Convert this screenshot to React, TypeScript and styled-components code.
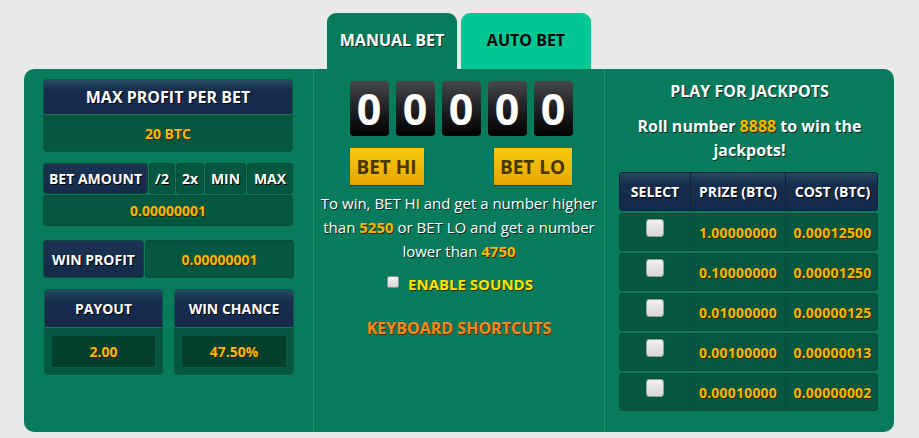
import React from "react";
import styled, { createGlobalStyle } from "styled-components";

const Global = createGlobalStyle`
  html, body { margin: 0; padding: 0; background: #e9e9e9; }
  body { font-family: "Open Sans", "Liberation Sans", sans-serif; }
  * { box-sizing: border-box; }
`;

const Page = styled.div`
  width: 919px;
  height: 438px;
  padding: 13px 25px 0 24px;
  display: flex;
  flex-direction: column;
`;

const Tabs = styled.div`
  display: flex;
  justify-content: center;
  gap: 4px;
  height: 56px;
`;

const Tab = styled.div<{ $active?: boolean }>`
  width: 130px;
  height: 56px;
  border-radius: 9px 9px 0 0;
  background: ${(p) => (p.$active ? "#077b5c" : "#00c793")};
  color: ${(p) => (p.$active ? "#fff" : "#0a0a0a")};
  text-shadow: ${(p) => (p.$active ? "1px 1px 0 #0b2a22" : "none")};
  font-weight: 700;
  font-size: 16px;
  display: flex;
  align-items: center;
  justify-content: center;
  padding-bottom: 2px;
`;

const Panel = styled.div`
  height: 363px;
  background: #077b5c;
  border-radius: 10px;
  display: grid;
  grid-template-columns: 289px 291px 290px;
`;

const Column = styled.div<{ $divider?: boolean }>`
  border-left: ${(p) => (p.$divider ? "1px solid #16966d" : "none")};
  display: flex;
  flex-direction: column;
  align-items: center;
`;

const LeftCol = styled(Column)`
  padding: 10px 20px 0 19px;
  align-items: stretch;
`;

const Box = styled.div`
  border-radius: 4px;
  overflow: hidden;
  border: 1px solid #0b5a40;
  background: #06573f;
`;

const NavyHead = styled.div<{ $h: number; $size?: number }>`
  height: ${(p) => p.$h}px;
  background: linear-gradient(#274a63 0%, #172d4d 30%, #152a4a 100%);
  color: #fff;
  font-weight: 700;
  font-size: ${(p) => p.$size ?? 14}px;
  text-shadow: 1px 1px 0 #000;
  display: flex;
  align-items: center;
  justify-content: center;
  border-bottom: 1px solid #1e7458;
`;

const Value = styled.div<{ $h: number }>`
  height: ${(p) => p.$h}px;
  color: #f8b800;
  font-weight: 700;
  font-size: 14px;
  text-shadow: 1px 1px 0 #3a2000;
  display: flex;
  align-items: center;
  justify-content: center;
`;

const BetGroup = styled.div`
  margin-top: 11px;
  display: flex;
  flex-direction: column;
  gap: 1px;
`;

const BetRow = styled.div`
  display: flex;
  gap: 1px;
  height: 31px;
`;

const Cell = styled.div<{ $w?: number; $navy?: boolean }>`
  ${(p) => (p.$w ? `width: ${p.$w}px;` : "flex: 1;")}
  background: ${(p) =>
    p.$navy ? "linear-gradient(#1b3352, #152a4a)" : "#06573f"};
  border: 1px solid #0a4c37;
  border-radius: 3px;
  color: #fff;
  font-weight: 700;
  font-size: 14px;
  text-shadow: 1px 1px 0 #000;
  display: flex;
  align-items: center;
  justify-content: center;
`;

const BetValue = styled(Cell)`
  height: 31px;
  flex: none;
  color: #f8b800;
  text-shadow: 1px 1px 0 #3a2000;
`;

const ProfitRow = styled.div`
  margin-top: 14px;
  height: 38px;
  display: flex;
  gap: 1px;
`;

const ProfitValue = styled(Cell)`
  color: #f8b800;
  text-shadow: 1px 1px 0 #3a2000;
  margin-right: -1px;
`;

const StatRow = styled.div`
  margin-top: 11px;
  display: grid;
  grid-template-columns: 119px 120px;
  column-gap: 11px;
  margin-left: 1px;
`;

const StatBox = styled(Box)`
  height: 86px;
  display: flex;
  flex-direction: column;
`;

const StatInner = styled.div`
  margin: 7px 6px 6px;
  height: 33px;
  background: #033f2c;
  border: 1px solid #0b5a42;
  border-radius: 2px;
  color: #f8b800;
  font-weight: 700;
  font-size: 14px;
  text-shadow: 1px 1px 0 #3a2000;
  display: flex;
  align-items: center;
  justify-content: center;
`;

const MiddleCol = styled(Column)`
  padding-top: 12px;
`;

const Digits = styled.div`
  display: flex;
  gap: 7px;
  margin-left: 4px;
`;

const Digit = styled.div`
  width: 39px;
  height: 55px;
  border-radius: 4px;
  background: linear-gradient(#45484d 0%, #232427 45%, #000 100%);
  color: #fff;
  font-weight: 700;
  font-size: 43px;
  display: flex;
  align-items: center;
  justify-content: center;
  line-height: 1;
`;

const Buttons = styled.div`
  margin-top: 12px;
  width: 222px;
  margin-left: 3px;
  display: flex;
  justify-content: space-between;
`;

const BetButton = styled.div<{ $w: number }>`
  width: ${(p) => p.$w}px;
  height: 37px;
  background: linear-gradient(#f7cb12, #e6a700);
  box-shadow: 0 1px 1px rgba(0, 0, 0, 0.35);
  color: #4a3505;
  font-weight: 700;
  font-size: 19px;
  display: flex;
  align-items: center;
  justify-content: center;
`;

const Info = styled.div`
  margin-top: 6px;
  width: 280px;
  text-align: center;
  color: #fff;
  font-size: 15px;
  line-height: 24px;
  text-shadow: 1px 1px 0 #0b2a22;
`;

const Num = styled.span`
  color: #f8b800;
  font-weight: 700;
  text-shadow: 1px 1px 0 #3a2000;
`;

const SoundRow = styled.label`
  margin-top: 11px;
  display: flex;
  align-items: center;
  gap: 9px;
  color: #ffe400;
  font-weight: 700;
  font-size: 15px;
  text-shadow: 1px 1px 0 #2a2a00;
  margin-left: 2px;
`;

const SmallBox = styled.span`
  width: 12px;
  height: 12px;
  border: 1px solid #8e8e8e;
  border-radius: 2px;
  background: linear-gradient(#f4f4f4, #d6d6d6);
  margin-top: -4px;
`;

const Shortcuts = styled.div`
  margin-top: 23px;
  color: #f98a1e;
  font-weight: 700;
  font-size: 16px;
  text-shadow: 1px 1px 0 #5a2a00;
`;

const RightCol = styled(Column)`
  padding-top: 10px;
`;

const Title = styled.div`
  color: #fff;
  font-weight: 700;
  font-size: 16px;
  line-height: 24px;
  text-shadow: 1px 1px 0 #0b2a22;
  text-align: center;
`;

const Roll = styled(Title)`
  margin-top: 11px;
  width: 250px;
`;

const Table = styled.div`
  margin-top: 10px;
  width: 259px;
  display: flex;
  flex-direction: column;
  gap: 2px;
  margin-left: -2px;
`;

const TRow = styled.div<{ $head?: boolean }>`
  display: grid;
  grid-template-columns: 70px 95px 94px;
  height: ${(p) => (p.$head ? 39 : 38)}px;
  border-radius: 3px;
  overflow: hidden;
  border: 1px solid ${(p) => (p.$head ? "#10283f" : "#0a4c37")};
  background: ${(p) =>
    p.$head ? "linear-gradient(#274a63 0%, #172d4d 30%, #152a4a 100%)" : "#06573f"};
`;

const TCell = styled.div<{ $head?: boolean; $first?: boolean }>`
  border-left: ${(p) => (p.$first ? "none" : `1px solid ${p.$head ? "#0e2238" : "#0a4c37"}`)};
  display: flex;
  align-items: center;
  justify-content: center;
  font-weight: 700;
  font-size: 14px;
  letter-spacing: ${(p) => (p.$head ? "0" : "0.2px")};
  color: ${(p) => (p.$head ? "#fff" : "#f8b800")};
  text-shadow: 1px 1px 0 ${(p) => (p.$head ? "#000" : "#3a2000")};
`;

const Check = styled.span`
  width: 18px;
  height: 18px;
  border-radius: 3px;
  border: 1px solid #9a9a9a;
  background: linear-gradient(#efefef, #d8d8d8);
  margin-top: -8px;
`;

const jackpots = [
  ["1.00000000", "0.00012500"],
  ["0.10000000", "0.00001250"],
  ["0.01000000", "0.00000125"],
  ["0.00100000", "0.00000013"],
  ["0.00010000", "0.00000002"],
];

export default function App() {
  return (
    <>
      <Global />
      <Page>
        <Tabs>
          <Tab $active>MANUAL BET</Tab>
          <Tab>AUTO BET</Tab>
        </Tabs>
        <Panel>
          <LeftCol>
            <Box>
              <NavyHead $h={35} $size={16}>MAX PROFIT PER BET</NavyHead>
              <Value $h={36}>20 BTC</Value>
            </Box>
            <BetGroup>
              <BetRow>
                <Cell $w={105} $navy>BET AMOUNT</Cell>
                <Cell $w={26}>/2</Cell>
                <Cell $w={28}>2x</Cell>
                <Cell $w={41}>MIN</Cell>
                <Cell>MAX</Cell>
              </BetRow>
              <BetValue>0.00000001</BetValue>
            </BetGroup>
            <ProfitRow>
              <Cell $w={101} $navy>WIN PROFIT</Cell>
              <ProfitValue>0.00000001</ProfitValue>
            </ProfitRow>
            <StatRow>
              <StatBox>
                <NavyHead $h={39}>PAYOUT</NavyHead>
                <StatInner>2.00</StatInner>
              </StatBox>
              <StatBox>
                <NavyHead $h={39}>WIN CHANCE</NavyHead>
                <StatInner>47.50%</StatInner>
              </StatBox>
            </StatRow>
          </LeftCol>
          <MiddleCol $divider>
            <Digits>
              {[0, 0, 0, 0, 0].map((d, i) => (
                <Digit key={i}>{d}</Digit>
              ))}
            </Digits>
            <Buttons>
              <BetButton $w={74}>BET HI</BetButton>
              <BetButton $w={78}>BET LO</BetButton>
            </Buttons>
            <Info>
              To win, BET HI and get a number higher than <Num>5250</Num> or BET LO
              and get a number lower than <Num>4750</Num>
            </Info>
            <SoundRow>
              <SmallBox />
              ENABLE SOUNDS
            </SoundRow>
            <Shortcuts>KEYBOARD SHORTCUTS</Shortcuts>
          </MiddleCol>
          <RightCol $divider>
            <Title>PLAY FOR JACKPOTS</Title>
            <Roll>
              Roll number <Num>8888</Num> to win the jackpots!
            </Roll>
            <Table>
              <TRow $head>
                <TCell $head $first>SELECT</TCell>
                <TCell $head>PRIZE (BTC)</TCell>
                <TCell $head>COST (BTC)</TCell>
              </TRow>
              {jackpots.map(([prize, cost]) => (
                <TRow key={prize}>
                  <TCell $first>
                    <Check />
                  </TCell>
                  <TCell>{prize}</TCell>
                  <TCell>{cost}</TCell>
                </TRow>
              ))}
            </Table>
          </RightCol>
        </Panel>
      </Page>
    </>
  );
}
